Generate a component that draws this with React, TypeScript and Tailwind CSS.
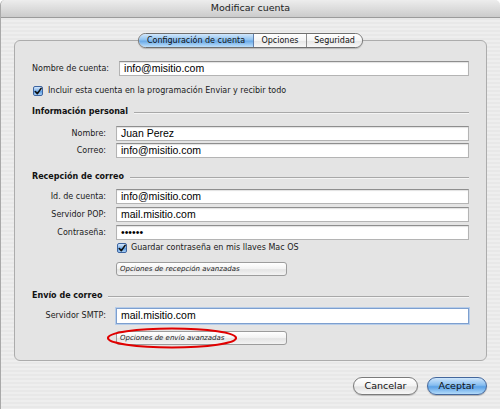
import React from "react";

const ui = { fontFamily: '"DejaVu Sans", "Noto Sans", sans-serif' };
const helv = { fontFamily: '"Liberation Sans", Arial, sans-serif' };

function Field({ value, focus, h = "h-[15px]" }: { value: string; focus?: boolean; h?: string }) {
  return (
    <div
      className={`${h} flex-1 flex items-center bg-white pl-[4px] text-[10.5px] text-black ${
        focus
          ? "border border-[#7d9fcf] shadow-[0_0_0_1px_#b7cde9]"
          : "border border-[#b4b4b4] border-t-[#8e8e8e] shadow-[inset_0_1px_1px_rgba(0,0,0,0.12)]"
      }`}
      style={helv}
    >
      {value}
    </div>
  );
}

function Row({ label, children, mt }: { label: string; children: React.ReactNode; mt: string }) {
  return (
    <div className={`flex items-center ${mt}`}>
      <div className="w-[75px] text-right text-[8px] text-[#1a1a1a] pr-[1px]">{label}</div>
      <div className="ml-[9px] flex flex-1">{children}</div>
    </div>
  );
}

function Check() {
  return (
    <div className="w-[10px] h-[10px] rounded-[2px] border border-[#3d64a0] bg-[linear-gradient(to_bottom,#d3e6fb,#7fb3ea_50%,#5d9de2_55%,#a9d0f6)] flex items-center justify-center">
      <svg width="9" height="9" viewBox="0 0 9 9">
        <path d="M1.5 4.5 L3.7 7 L8 1" stroke="#111" strokeWidth="1.8" fill="none" strokeLinecap="round" strokeLinejoin="round" />
      </svg>
    </div>
  );
}

function Header({ text, mt }: { text: string; mt: string }) {
  return (
    <div className={`flex items-center h-[12px] ${mt}`}>
      <div className="text-[8px] font-bold text-[#111]">{text}</div>
      <div className="ml-[6px] flex-1 h-px bg-[#a8a8a8] shadow-[0_1px_0_#f4f4f4]" />
    </div>
  );
}

function SmallButton({ text }: { text: string }) {
  return (
    <div className="w-[171px] h-[14px] rounded-[3px] border border-[#9c9c9c] bg-[linear-gradient(to_bottom,#ffffff,#f2f2f2_50%,#e4e4e4_55%,#f3f3f3)] flex items-center pl-[3px] text-[7px] italic text-[#222]">
      {text}
    </div>
  );
}

export default function App() {
  return (
    <div
      className="w-[500px] h-[409px] overflow-hidden flex flex-col rounded-t-[5px] border-l border-[#a9a9a9] bg-[repeating-linear-gradient(to_bottom,#eeeeee_0px,#eeeeee_2px,#e8e8e8_2px,#e8e8e8_4px)]"
      style={ui}
    >
      <div className="h-[18px] shrink-0 flex items-center justify-center rounded-t-[5px] border-b border-[#9b9b9b] bg-[linear-gradient(to_bottom,#ededed,#d9d9d9_60%,#cbcbcb)] text-[9.5px] text-[#222]">
        Modificar cuenta
      </div>

      <div className="px-[13px]">
        <div className="relative z-10 mt-[15px] flex justify-center">
          <div className="flex h-[15px] rounded-full border border-[#6f6f6f] overflow-hidden text-[8px] text-[#111] shadow-[0_1px_1px_rgba(0,0,0,0.2)]">
            <div className="w-[115px] flex items-center justify-center bg-[linear-gradient(to_bottom,#d2e7fb,#8ec2f0_45%,#6aaae8_55%,#bfe0fa)] border-r border-[#5f7fae]">
              Configuración de cuenta
            </div>
            <div className="w-[53px] flex items-center justify-center bg-[linear-gradient(to_bottom,#ffffff,#f4f4f4_50%,#e6e6e6_55%,#f8f8f8)] border-r border-[#8d8d8d]">
              Opciones
            </div>
            <div className="w-[55px] flex items-center justify-center bg-[linear-gradient(to_bottom,#ffffff,#f4f4f4_50%,#e6e6e6_55%,#f8f8f8)]">
              Seguridad
            </div>
          </div>
        </div>

        <div className="-mt-[8px] h-[321px] rounded-[6px] border border-[#acacac] bg-[#e4e4e4] px-[17px] pt-[20px] pb-[17px] flex flex-col">
          <div className="flex items-center h-[15px]">
            <div className="text-[8px] text-[#1a1a1a]">Nombre de cuenta:</div>
            <div className="ml-[10px] flex flex-1">
              <Field value="info@misitio.com" />
            </div>
          </div>

          <div className="flex items-center h-[10px] mt-[10px] pl-[1px]">
            <Check />
            <div className="ml-[5px] text-[8px] text-[#1a1a1a]">
              Incluir esta cuenta en la programación Enviar y recibir todo
            </div>
          </div>

          <Header text="Información personal" mt="mt-[10px]" />
          <Row label="Nombre:" mt="mt-[8px]">
            <Field value="Juan Perez" />
          </Row>
          <Row label="Correo:" mt="mt-[2px]">
            <Field value="info@misitio.com" />
          </Row>

          <Header text="Recepción de correo" mt="mt-[13px]" />
          <Row label="Id. de cuenta:" mt="mt-[6px]">
            <Field value="info@misitio.com" />
          </Row>
          <Row label="Servidor POP:" mt="mt-[3px]">
            <Field value="mail.misitio.com" />
          </Row>
          <Row label="Contraseña:" mt="mt-[3px]">
            <Field value="••••••" />
          </Row>
          <div className="flex items-center h-[10px] mt-[3px] pl-[85px]">
            <Check />
            <div className="ml-[4px] text-[8px] text-[#1a1a1a]">Guardar contraseña en mis llaves Mac OS</div>
          </div>
          <div className="mt-[9px] pl-[84px]">
            <SmallButton text="Opciones de recepción avanzadas" />
          </div>

          <Header text="Envío de correo" mt="mt-[14px]" />
          <Row label="Servidor SMTP:" mt="mt-[6px]">
            <Field value="mail.misitio.com" focus h="h-[16px]" />
          </Row>
          <div className="mt-[7px] pl-[84px]">
            <div className="relative w-[171px]">
              <SmallButton text="Opciones de envío avanzadas" />
              <svg
                className="absolute left-[-10px] top-[-4px]"
                width="132"
                height="22"
                viewBox="0 0 132 22"
              >
                <ellipse cx="66" cy="11" rx="64" ry="9.5" fill="none" stroke="#e00000" strokeWidth="2.2" />
              </svg>
            </div>
          </div>
        </div>

        <div className="mt-[16px] flex justify-end gap-[9px]">
          <div className="w-[65px] h-[18px] rounded-full border border-[#7b7b7b] bg-[linear-gradient(to_bottom,#ffffff,#f3f3f3_50%,#e2e2e2_55%,#f7f7f7)] flex items-center justify-center text-[9.5px] text-[#111] shadow-[0_1px_1px_rgba(0,0,0,0.2)]">
            Cancelar
          </div>
          <div className="w-[60px] h-[18px] rounded-full border border-[#44679c] bg-[linear-gradient(to_bottom,#cfe6fb,#86bdf0_45%,#5ba1e6_55%,#b3dbfa)] flex items-center justify-center text-[9.5px] text-[#111] shadow-[0_1px_1px_rgba(0,0,0,0.25)]">
            Aceptar
          </div>
        </div>
      </div>
    </div>
  );
}
